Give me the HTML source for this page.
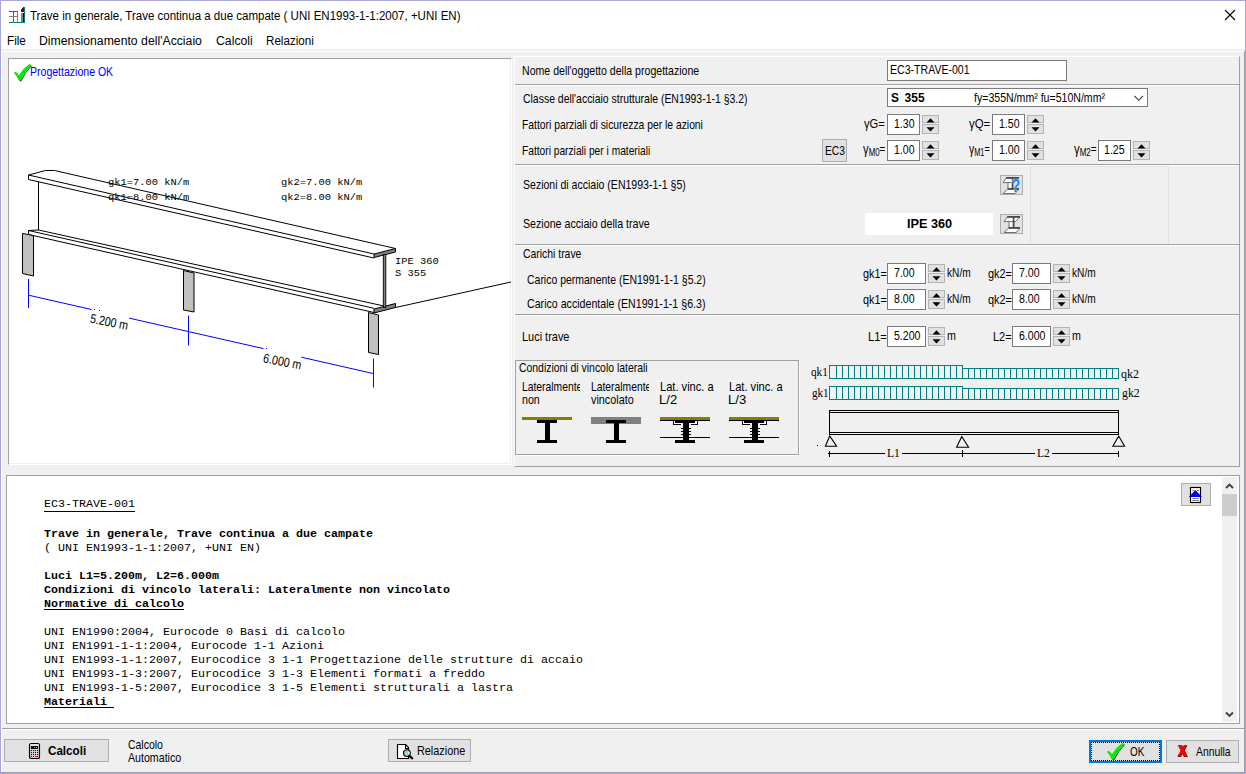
<!DOCTYPE html>
<html lang="it"><head><meta charset="utf-8"><title>Trave in generale, Trave continua a due campate</title>
<style>
html,body{margin:0;padding:0}
body{width:1246px;height:774px;position:relative;overflow:hidden;background:#f0f0f0;font:13px 'Liberation Sans',sans-serif;color:#000}
.a{position:absolute;box-sizing:border-box}
.t{position:absolute;white-space:pre;transform-origin:0 50%;display:block}
.inp{position:absolute;box-sizing:border-box;background:#fff;border:1px solid #7a7a7a}
.btn{position:absolute;box-sizing:border-box;background:#e1e1e1;border:1px solid #adadad}
.sb{position:absolute;box-sizing:border-box;background:#e1e1e1;border:1px solid #b4b4b4;width:17px}
.hl{position:absolute;height:1px;background:#a0a0a0}
.hw{position:absolute;height:1px;background:#fff}
svg{position:absolute;overflow:visible}
</style></head><body>
<div class="a" style="left:0;top:0;width:1246px;height:774px;border:1px solid #a9a7d8"></div>
<div class="a" style="left:1px;top:1px;width:1244px;height:48px;background:#fff"></div>
<div class="a" style="left:1px;top:51px;width:1243px;height:1px;background:#fff"></div>
<div class="a" style="left:1px;top:51px;width:1px;height:721px;background:#fff"></div>
<div class="a" style="left:1244px;top:51px;width:1px;height:722px;background:#a0a0a0"></div>
<div class="a" style="left:1px;top:772px;width:1244px;height:1px;background:#a0a0a0"></div>
<header class="titlebar">
<svg style="left:0;top:0" width="30" height="30" shape-rendering="crispEdges">
<rect x="9" y="11" width="9" height="1" fill="#008080"/><rect x="9" y="22" width="16" height="1" fill="#008080"/>
<rect x="13" y="11" width="1" height="12" fill="#008080"/><rect x="24" y="7" width="1" height="16" fill="#008080"/>
<rect x="9" y="16" width="9" height="1" fill="#808080"/><rect x="17" y="12" width="1" height="10" fill="#808080"/>
<rect x="21" y="13" width="2" height="9" fill="#808080"/><rect x="23" y="13" width="1" height="9" fill="#000080"/>
<polygon points="21,9 24,7 24,12 21,12" fill="#800000"/></svg>
<span class="t" id="t0" style="left:30.0px;top:5.67px;font:12.5px 'Liberation Sans',sans-serif;line-height:20px;transform:scaleX(0.9208);">Trave in generale, Trave continua a due campate ( UNI EN1993-1-1:2007, +UNI EN)</span>
<svg style="left:1224px;top:9px" width="12" height="12"><path d="M1,1 L11,11 M11,1 L1,11" stroke="#000" stroke-width="1.1" fill="none"/></svg>
</header><nav class="menubar">
<span class="t" id="t1" style="left:7.061996666709075px;top:30.67px;font:12.5px 'Liberation Sans',sans-serif;line-height:20px;transform:scaleX(0.9380);">File</span>
<span class="t" id="t2" style="left:39.02058889949978px;top:30.67px;font:12.5px 'Liberation Sans',sans-serif;line-height:20px;transform:scaleX(0.9794);">Dimensionamento dell'Acciaio</span>
<span class="t" id="t3" style="left:216.0px;top:30.67px;font:12.5px 'Liberation Sans',sans-serif;line-height:20px;transform:scaleX(0.9800);">Calcoli</span>
<span class="t" id="t4" style="left:265.57129317679926px;top:30.67px;font:12.5px 'Liberation Sans',sans-serif;line-height:20px;transform:scaleX(0.9287);">Relazioni</span>
</nav><main><section class="drawing-panel">
<div class="a" style="left:8px;top:58px;width:504px;height:407px;background:#fff;border:1px solid #a0a0a0;border-right-color:#fff;border-bottom-color:#fff;box-shadow:inset -1px -1px 0 #efefef"></div>
<svg style="left:0;top:0" width="40" height="90"><path d="M13.8,72.8 L15.6,71.7 Q17.6,73 18.9,75.2 Q23,68.5 29.3,64.1 L31.4,65.2 Q24.5,72 20.7,80.9 L18.5,80.1 Q17,76 13.8,72.8 Z" fill="#00ee00"/><path d="M31.6,65.6 Q24.9,72.2 21,81 L19.6,80.6" fill="none" stroke="#2c3a2c" stroke-width="1"/></svg>
<span class="t" id="t5" style="left:30.38976166756073px;top:61.50px;font:13px 'Liberation Sans',sans-serif;line-height:20px;color:#0000ff;transform:scaleX(0.8102);">Progettazione OK</span>
<svg style="left:0;top:0" width="520" height="470" fill="none" stroke="#000" stroke-width="1">
<g id="beam">
<!-- top flange -->
<path d="M28.5,175 L45.5,170.5 L54.5,170.5 L395.5,248.5"/>
<path d="M28.5,175 L374,254"/>
<path d="M28.5,175 L28.5,179.5 L374,258"/>
<!-- web left edge -->
<path d="M38.5,182 L38.5,230"/>
<!-- bottom flange -->
<path d="M28.5,234.5 L28.5,230.5 L38.5,230 L384,306"/>
<path d="M28.5,230.5 L374,308.3"/>
<path d="M28.5,234.5 L374,312.5"/>
<!-- right end section -->
<polygon points="374,254 395.5,248.5 395.5,252 374,257.5" fill="#808080"/>
<polygon points="374,309 395.5,303.5 395.5,307.5 374,313" fill="#808080"/>
<rect x="383.3" y="254.5" width="2.5" height="53" fill="#808080" stroke="#000" stroke-width="0.9"/>
<!-- line to right -->
<path d="M395.5,307.5 L511,282"/>
<!-- supports -->
<polygon points="22.5,233.5 28.5,234.5 33.5,236 33.5,276 22.5,273.5" fill="#c0c0c0"/>
<polygon points="183.5,270.5 194,273 194,312 183.5,310" fill="#c0c0c0"/>
<polygon points="368.5,312.5 378.5,315 378.5,354.5 368.5,352.5" fill="#c0c0c0"/>
</g>
<g stroke="#0000ff">
<path d="M28.5,279 V308 M188.5,315.5 V345.5 M373.5,358.5 V387.5"/>
<path d="M28.5,295.2 L91.5,309.5 M129,318.1 L188.5,331.6 L263.5,348.6 M301.3,357.2 L373.5,373.6"/>
</g>
</svg>
<span class="t" id="t6" style="left:108.0px;top:172.94px;font:9.6px 'Liberation Mono',monospace;line-height:20px;transform:scaleX(1.0854);">gk1=7.00 kN/m</span>
<span class="t" id="t7" style="left:108.0px;top:187.74px;font:9.6px 'Liberation Mono',monospace;line-height:20px;transform:scaleX(1.0854);">qk1=8.00 kN/m</span>
<span class="t" id="t8" style="left:281.0px;top:172.94px;font:9.6px 'Liberation Mono',monospace;line-height:20px;transform:scaleX(1.0854);">gk2=7.00 kN/m</span>
<span class="t" id="t9" style="left:281.0px;top:187.74px;font:9.6px 'Liberation Mono',monospace;line-height:20px;transform:scaleX(1.0854);">qk2=8.00 kN/m</span>
<span class="t" id="t10" style="left:395.0px;top:252.44px;font:9.6px 'Liberation Mono',monospace;line-height:20px;transform:scaleX(1.0853);">IPE 360</span>
<span class="t" id="t11" style="left:395.0px;top:264.44px;font:9.6px 'Liberation Mono',monospace;line-height:20px;transform:scaleX(1.0851);">S 355</span>
<svg style="left:0;top:0" width="520" height="470" font-family="'Liberation Sans',sans-serif" font-size="13" fill="#000">
<text transform="translate(89.5,322.6) rotate(11) scale(0.82,1)">5.200 m</text>
<text transform="translate(262.6,362.2) rotate(11) scale(0.82,1)">6.000 m</text>
<g fill="#0000ff" shape-rendering="crispEdges"><rect x="94" y="309" width="1" height="1"/><rect x="99" y="310" width="1" height="1"/><rect x="266" y="348" width="1" height="1"/></g></svg>
</section><section class="params-panel">
<div class="a" style="left:514px;top:56px;width:726px;height:411px;border:1px solid #fff;border-right-color:#a0a0a0;border-bottom-color:#a0a0a0"></div>
<div class="hl" style="left:515px;top:84px;width:724px"></div><div class="hw" style="left:515px;top:85px;width:724px"></div>
<div class="hl" style="left:515px;top:164px;width:724px"></div><div class="hw" style="left:515px;top:165px;width:724px"></div>
<div class="hl" style="left:515px;top:244px;width:724px"></div><div class="hw" style="left:515px;top:245px;width:724px"></div>
<div class="hl" style="left:515px;top:314px;width:724px"></div><div class="hw" style="left:515px;top:315px;width:724px"></div>
<div class="a" style="left:1030px;top:166px;width:139px;height:78px;border:1px solid #e2e2e2;border-bottom:none"></div>
<span class="t" id="t12" style="left:521.9865999761067px;top:60.50px;font:13px 'Liberation Sans',sans-serif;line-height:20px;transform:scaleX(0.8134);">Nome dell'oggetto della progettazione</span>
<span class="t" id="t13" style="left:522.8px;top:88.50px;font:13px 'Liberation Sans',sans-serif;line-height:20px;transform:scaleX(0.8039);">Classe dell'acciaio strutturale (EN1993-1-1 §3.2)</span>
<span class="t" id="t14" style="left:522.0051415476333px;top:114.50px;font:13px 'Liberation Sans',sans-serif;line-height:20px;transform:scaleX(0.7949);">Fattori parziali di sicurezza per le azioni</span>
<span class="t" id="t15" style="left:522.0148349054476px;top:140.50px;font:13px 'Liberation Sans',sans-serif;line-height:20px;transform:scaleX(0.7852);">Fattori parziali per i materiali</span>
<span class="t" id="t16" style="left:522.8px;top:174.50px;font:13px 'Liberation Sans',sans-serif;line-height:20px;transform:scaleX(0.8107);">Sezioni di acciaio (EN1993-1-1 §5)</span>
<span class="t" id="t17" style="left:522.8px;top:213.50px;font:13px 'Liberation Sans',sans-serif;line-height:20px;transform:scaleX(0.8199);">Sezione acciaio della trave</span>
<span class="t" id="t18" style="left:522.8px;top:243.50px;font:13px 'Liberation Sans',sans-serif;line-height:20px;transform:scaleX(0.8002);">Carichi trave</span>
<span class="t" id="t19" style="left:526.8px;top:269.50px;font:13px 'Liberation Sans',sans-serif;line-height:20px;transform:scaleX(0.8054);">Carico permanente (EN1991-1-1 §5.2)</span>
<span class="t" id="t20" style="left:526.8px;top:293.50px;font:13px 'Liberation Sans',sans-serif;line-height:20px;transform:scaleX(0.8178);">Carico accidentale (EN1991-1-1 §6.3)</span>
<span class="t" id="t21" style="left:521.9583661033762px;top:326.50px;font:13px 'Liberation Sans',sans-serif;line-height:20px;transform:scaleX(0.8416);">Luci trave</span>
<div class="inp" style="left:887px;top:60px;width:180px;height:21px"></div>
<span class="t" id="t22" style="left:889.787883802355px;top:59.50px;font:13px 'Liberation Sans',sans-serif;line-height:20px;transform:scaleX(0.8121);">EC3-TRAVE-001</span>
<div class="inp" style="left:887px;top:88px;width:261px;height:19px"></div>
<span class="t" id="t23" style="left:891px;top:87.50px;font:bold 13px 'Liberation Sans',sans-serif;line-height:20px;transform:scaleX(0.9209);word-spacing:2.5px;">S 355</span>
<span class="t" id="t24" style="left:974.3px;top:87.50px;font:13px 'Liberation Sans',sans-serif;line-height:20px;transform:scaleX(0.8129);">fy=355N/mm² fu=510N/mm²</span>
<svg style="left:1133px;top:94px" width="12" height="8"><path d="M1.5,2 L5.75,6.3 L10,2" stroke="#404040" stroke-width="1.1" fill="none"/></svg>
<span class="t" id="t25" style="left:864.0px;top:113.50px;font:13px 'Liberation Sans',sans-serif;line-height:20px;transform:scaleX(0.8555);">γG=</span>
<div class="inp" style="left:887px;top:114px;width:33px;height:21px"></div>
<span class="t" id="t26" style="left:894.0px;top:113.50px;font:13px 'Liberation Sans',sans-serif;line-height:20px;transform:scaleX(0.8097);">1.30</span>
<div class="sb" style="left:922px;top:115px;height:8px"></div><div class="sb" style="left:922px;top:124px;height:10px"></div><svg style="left:922px;top:114px" width="17" height="21"><polygon points="4.5,8.5 12.5,8.5 8.5,4.3" fill="#000"/><polygon points="4.5,13.2 12.5,13.2 8.5,17.4" fill="#000"/></svg>
<span class="t" id="t27" style="left:969.0px;top:113.50px;font:13px 'Liberation Sans',sans-serif;line-height:20px;transform:scaleX(0.8767);">γQ=</span>
<div class="inp" style="left:992px;top:114px;width:33px;height:21px"></div>
<span class="t" id="t28" style="left:999.0px;top:113.50px;font:13px 'Liberation Sans',sans-serif;line-height:20px;transform:scaleX(0.8097);">1.50</span>
<div class="sb" style="left:1027px;top:115px;height:8px"></div><div class="sb" style="left:1027px;top:124px;height:10px"></div><svg style="left:1027px;top:114px" width="17" height="21"><polygon points="4.5,8.5 12.5,8.5 8.5,4.3" fill="#000"/><polygon points="4.5,13.2 12.5,13.2 8.5,17.4" fill="#000"/></svg>
<span class="t" id="t29" style="left:862.6px;top:138.50px;font:13px 'Liberation Sans',sans-serif;line-height:20px;transform:scaleX(0.7512);"><span style="font-size:15px">γ</span><span style="font-size:10.5px;position:relative;top:2.5px">M0</span><span style="position:relative;top:-1px">=</span></span>
<div class="inp" style="left:887px;top:140px;width:33px;height:21px"></div>
<span class="t" id="t30" style="left:894.2px;top:139.50px;font:13px 'Liberation Sans',sans-serif;line-height:20px;transform:scaleX(0.8097);">1.00</span>
<div class="sb" style="left:922px;top:141px;height:8px"></div><div class="sb" style="left:922px;top:150px;height:10px"></div><svg style="left:922px;top:140px" width="17" height="21"><polygon points="4.5,8.5 12.5,8.5 8.5,4.3" fill="#000"/><polygon points="4.5,13.2 12.5,13.2 8.5,17.4" fill="#000"/></svg>
<span class="t" id="t31" style="left:969px;top:138.50px;font:13px 'Liberation Sans',sans-serif;line-height:20px;transform:scaleX(0.6973);"><span style="font-size:15px">γ</span><span style="font-size:10.5px;position:relative;top:2.5px">M1</span><span style="position:relative;top:-1px">=</span></span>
<div class="inp" style="left:992px;top:140px;width:33px;height:21px"></div>
<span class="t" id="t32" style="left:999.0px;top:139.50px;font:13px 'Liberation Sans',sans-serif;line-height:20px;transform:scaleX(0.8177);">1.00</span>
<div class="sb" style="left:1027px;top:141px;height:8px"></div><div class="sb" style="left:1027px;top:150px;height:10px"></div><svg style="left:1027px;top:140px" width="17" height="21"><polygon points="4.5,8.5 12.5,8.5 8.5,4.3" fill="#000"/><polygon points="4.5,13.2 12.5,13.2 8.5,17.4" fill="#000"/></svg>
<span class="t" id="t33" style="left:1074.2px;top:138.50px;font:13px 'Liberation Sans',sans-serif;line-height:20px;transform:scaleX(0.7613);"><span style="font-size:15px">γ</span><span style="font-size:10.5px;position:relative;top:2.5px">M2</span><span style="position:relative;top:-1px">=</span></span>
<div class="inp" style="left:1098px;top:140px;width:33px;height:21px"></div>
<span class="t" id="t34" style="left:1104.0px;top:139.50px;font:13px 'Liberation Sans',sans-serif;line-height:20px;transform:scaleX(0.8177);">1.25</span>
<div class="sb" style="left:1133px;top:141px;height:8px"></div><div class="sb" style="left:1133px;top:150px;height:10px"></div><svg style="left:1133px;top:140px" width="17" height="21"><polygon points="4.5,8.5 12.5,8.5 8.5,4.3" fill="#000"/><polygon points="4.5,13.2 12.5,13.2 8.5,17.4" fill="#000"/></svg>
<div class="btn" style="left:822px;top:139px;width:25px;height:23px"></div>
<span class="t" id="t35" style="left:824.9144338684473px;top:140.50px;font:13px 'Liberation Sans',sans-serif;line-height:20px;transform:scaleX(0.7856);">EC3</span>
<div class="btn" style="left:1000px;top:175px;width:23px;height:20px"></div>
<div class="btn" style="left:1000px;top:214px;width:23px;height:20px"></div>
<svg style="left:999px;top:175px" width="23" height="20" fill="#fff" stroke="#707070" stroke-width="1">
<polygon points="7.3,3 19.8,3 15.4,7.6 4,7.6"/>
<polygon points="9,7.6 13.4,7.6 13.4,13.6 9,13.6"/>
<polygon points="8.6,14 19.8,14 16.2,18.5 4,18.5"/>
<path d="M7.2,2.8 H20 M8.6,13.8 H20" stroke="#4a4a4a" stroke-width="1.7" fill="none"/><path d="M13.6,3 V14" stroke="#4a4a4a" stroke-width="1.7" fill="none"/></svg>
<svg style="left:1000px;top:214px" width="23" height="20" fill="#fff" stroke="#707070" stroke-width="1">
<polygon points="7.3,3 19.8,3 15.4,7.6 4,7.6"/>
<polygon points="9,7.6 13.4,7.6 13.4,13.6 9,13.6"/>
<polygon points="8.6,14 19.8,14 16.2,18.5 4,18.5"/>
<path d="M7.2,2.8 H20 M8.6,13.8 H20" stroke="#4a4a4a" stroke-width="1.7" fill="none"/><path d="M13.6,3 V14" stroke="#4a4a4a" stroke-width="1.7" fill="none"/></svg>
<span class="t" style="left:1011px;top:176px;font:bold 18px 'Liberation Sans',sans-serif;line-height:20px;color:#1a8cff;transform:scaleX(0.85);text-shadow:0 0 1px #fff">?</span>
<div class="a" style="left:865px;top:213px;width:128px;height:22px;background:#fff"></div>
<span class="t" id="t36" style="left:906.5px;top:213.50px;font:bold 13px 'Liberation Sans',sans-serif;line-height:20px;transform:scaleX(0.9755);">IPE 360</span>
<span class="t" id="t37" style="left:862.7px;top:263.50px;font:13px 'Liberation Sans',sans-serif;line-height:20px;transform:scaleX(0.8333);">gk1=</span>
<div class="inp" style="left:887px;top:263px;width:39px;height:21px"></div>
<span class="t" id="t38" style="left:893.8px;top:262.50px;font:13px 'Liberation Sans',sans-serif;line-height:20px;transform:scaleX(0.8137);">7.00</span>
<div class="sb" style="left:928px;top:264px;height:8px"></div><div class="sb" style="left:928px;top:273px;height:10px"></div><svg style="left:928px;top:263px" width="17" height="21"><polygon points="4.5,8.5 12.5,8.5 8.5,4.3" fill="#000"/><polygon points="4.5,13.2 12.5,13.2 8.5,17.4" fill="#000"/></svg>
<span class="t" id="t39" style="left:947.2px;top:262.50px;font:13px 'Liberation Sans',sans-serif;line-height:20px;transform:scaleX(0.7797);">kN/m</span>
<span class="t" id="t40" style="left:987.5px;top:263.50px;font:13px 'Liberation Sans',sans-serif;line-height:20px;transform:scaleX(0.8405);">gk2=</span>
<div class="inp" style="left:1012px;top:263px;width:39px;height:21px"></div>
<span class="t" id="t41" style="left:1018.8px;top:262.50px;font:13px 'Liberation Sans',sans-serif;line-height:20px;transform:scaleX(0.8137);">7.00</span>
<div class="sb" style="left:1053px;top:264px;height:8px"></div><div class="sb" style="left:1053px;top:273px;height:10px"></div><svg style="left:1053px;top:263px" width="17" height="21"><polygon points="4.5,8.5 12.5,8.5 8.5,4.3" fill="#000"/><polygon points="4.5,13.2 12.5,13.2 8.5,17.4" fill="#000"/></svg>
<span class="t" id="t42" style="left:1072.2px;top:262.50px;font:13px 'Liberation Sans',sans-serif;line-height:20px;transform:scaleX(0.7797);">kN/m</span>
<span class="t" id="t43" style="left:862.7px;top:289.50px;font:13px 'Liberation Sans',sans-serif;line-height:20px;transform:scaleX(0.8333);">qk1=</span>
<div class="inp" style="left:887px;top:289px;width:39px;height:21px"></div>
<span class="t" id="t44" style="left:893.8px;top:288.50px;font:13px 'Liberation Sans',sans-serif;line-height:20px;transform:scaleX(0.8137);">8.00</span>
<div class="sb" style="left:928px;top:290px;height:8px"></div><div class="sb" style="left:928px;top:299px;height:10px"></div><svg style="left:928px;top:289px" width="17" height="21"><polygon points="4.5,8.5 12.5,8.5 8.5,4.3" fill="#000"/><polygon points="4.5,13.2 12.5,13.2 8.5,17.4" fill="#000"/></svg>
<span class="t" id="t45" style="left:947.2px;top:288.50px;font:13px 'Liberation Sans',sans-serif;line-height:20px;transform:scaleX(0.7797);">kN/m</span>
<span class="t" id="t46" style="left:987.5px;top:289.50px;font:13px 'Liberation Sans',sans-serif;line-height:20px;transform:scaleX(0.8405);">qk2=</span>
<div class="inp" style="left:1012px;top:289px;width:39px;height:21px"></div>
<span class="t" id="t47" style="left:1018.8px;top:288.50px;font:13px 'Liberation Sans',sans-serif;line-height:20px;transform:scaleX(0.8137);">8.00</span>
<div class="sb" style="left:1053px;top:290px;height:8px"></div><div class="sb" style="left:1053px;top:299px;height:10px"></div><svg style="left:1053px;top:289px" width="17" height="21"><polygon points="4.5,8.5 12.5,8.5 8.5,4.3" fill="#000"/><polygon points="4.5,13.2 12.5,13.2 8.5,17.4" fill="#000"/></svg>
<span class="t" id="t48" style="left:1072.2px;top:288.50px;font:13px 'Liberation Sans',sans-serif;line-height:20px;transform:scaleX(0.7797);">kN/m</span>
<span class="t" id="t49" style="left:867.6446708987638px;top:326.50px;font:13px 'Liberation Sans',sans-serif;line-height:20px;transform:scaleX(0.8553);">L1=</span>
<div class="inp" style="left:887px;top:326px;width:39px;height:21px"></div>
<span class="t" id="t50" style="left:893.8px;top:325.50px;font:13px 'Liberation Sans',sans-serif;line-height:20px;transform:scaleX(0.8111);">5.200</span>
<div class="sb" style="left:928px;top:327px;height:8px"></div><div class="sb" style="left:928px;top:336px;height:10px"></div><svg style="left:928px;top:326px" width="17" height="21"><polygon points="4.5,8.5 12.5,8.5 8.5,4.3" fill="#000"/><polygon points="4.5,13.2 12.5,13.2 8.5,17.4" fill="#000"/></svg>
<span class="t" id="t51" style="left:947.2px;top:325.50px;font:13px 'Liberation Sans',sans-serif;line-height:20px;transform:scaleX(0.8200);">m</span>
<span class="t" id="t52" style="left:992.8544460884923px;top:326.50px;font:13px 'Liberation Sans',sans-serif;line-height:20px;transform:scaleX(0.8456);">L2=</span>
<div class="inp" style="left:1012px;top:326px;width:39px;height:21px"></div>
<span class="t" id="t53" style="left:1018.8px;top:325.50px;font:13px 'Liberation Sans',sans-serif;line-height:20px;transform:scaleX(0.8111);">6.000</span>
<div class="sb" style="left:1053px;top:327px;height:8px"></div><div class="sb" style="left:1053px;top:336px;height:10px"></div><svg style="left:1053px;top:326px" width="17" height="21"><polygon points="4.5,8.5 12.5,8.5 8.5,4.3" fill="#000"/><polygon points="4.5,13.2 12.5,13.2 8.5,17.4" fill="#000"/></svg>
<span class="t" id="t54" style="left:1072.2px;top:325.50px;font:13px 'Liberation Sans',sans-serif;line-height:20px;transform:scaleX(0.8200);">m</span>
<div class="a" style="left:515px;top:360px;width:284px;height:95px;border:1px solid #a0a0a0;box-shadow:1px 1px 0 #fff"></div>
<span class="t" id="t55" style="left:518.6px;top:357.50px;font:13px 'Liberation Sans',sans-serif;line-height:20px;transform:scaleX(0.8017);">Condizioni di vincolo laterali</span>
<div class="a" style="left:521.4px;top:378px;width:58.8px;height:16px;overflow:hidden"><span class="t" id="t56" style="left:0.20562521666895606px;top:-1.50px;font:13px 'Liberation Sans',sans-serif;line-height:20px;transform:scaleX(0.7944);">Lateralmente</span></div>
<span class="t" id="t57" style="left:522.4px;top:389.50px;font:13px 'Liberation Sans',sans-serif;line-height:20px;transform:scaleX(0.8201);">non</span>
<div class="a" style="left:590.4px;top:378px;width:58.8px;height:16px;overflow:hidden"><span class="t" id="t58" style="left:0.20562521666895606px;top:-1.50px;font:13px 'Liberation Sans',sans-serif;line-height:20px;transform:scaleX(0.7944);">Lateralmente</span></div>
<span class="t" id="t59" style="left:591.4px;top:389.50px;font:13px 'Liberation Sans',sans-serif;line-height:20px;transform:scaleX(0.8321);">vincolato</span>
<span class="t" id="t60" style="left:659.6458750711329px;top:376.50px;font:13px 'Liberation Sans',sans-serif;line-height:20px;transform:scaleX(0.8541);">Lat. vinc. a</span>
<span class="t" id="t61" style="left:659.4906065174533px;top:389.50px;font:13px 'Liberation Sans',sans-serif;line-height:20px;transform:scaleX(1.0094);">L/2</span>
<span class="t" id="t62" style="left:728.6458750711329px;top:376.50px;font:13px 'Liberation Sans',sans-serif;line-height:20px;transform:scaleX(0.8541);">Lat. vinc. a</span>
<span class="t" id="t63" style="left:728.4906065174533px;top:389.50px;font:13px 'Liberation Sans',sans-serif;line-height:20px;transform:scaleX(1.0094);">L/3</span>
<svg style="left:0;top:0" width="1246" height="470" shape-rendering="crispEdges">
<g><rect x="522" y="417" width="50" height="3" fill="#808000"/><rect x="537" y="420" width="20" height="3"/><rect x="545" y="420" width="5" height="23"/><rect x="537" y="440" width="20" height="3"/></g>
<g><rect x="591" y="417" width="50" height="7" fill="#808080"/><rect x="606" y="420" width="20" height="3"/><rect x="614" y="420" width="5" height="23"/><rect x="606" y="440" width="20" height="3"/></g>
<g transform="translate(0,0)"><rect x="660" y="417" width="50" height="3" fill="#808000"/><rect x="660" y="420" width="50" height="1"/>
<path d="M673.5,421 V424.5 H680.5 M697.5,421 V424.5 H690.5" fill="none" stroke="#000"/><path d="M674.5,421 V423.5 H681 M696.5,421 V423.5 H690" fill="none" stroke="#fff"/>
<rect x="675" y="421" width="20" height="2"/><rect x="683" y="421" width="6" height="22"/><rect x="681" y="428" width="10" height="1"/><rect x="681" y="431" width="10" height="1"/><rect x="681" y="434" width="10" height="1"/>
<rect x="660" y="437" width="50" height="1"/><rect x="675" y="440" width="20" height="3"/></g><g transform="translate(69,0)"><rect x="660" y="417" width="50" height="3" fill="#808000"/><rect x="660" y="420" width="50" height="1"/>
<path d="M673.5,421 V424.5 H680.5 M697.5,421 V424.5 H690.5" fill="none" stroke="#000"/><path d="M674.5,421 V423.5 H681 M696.5,421 V423.5 H690" fill="none" stroke="#fff"/>
<rect x="675" y="421" width="20" height="2"/><rect x="683" y="421" width="6" height="22"/><rect x="681" y="428" width="10" height="1"/><rect x="681" y="431" width="10" height="1"/><rect x="681" y="434" width="10" height="1"/>
<rect x="660" y="437" width="50" height="1"/><rect x="675" y="440" width="20" height="3"/></g></svg>
<div class="load-diagram">
<svg style="left:0;top:0" width="1246" height="470" shape-rendering="crispEdges" fill="none" stroke="#008080" stroke-width="1"><rect x="829.5" y="365.5" width="133" height="13"/><path d="M956.5,365 V378 M950.5,365 V378 M944.5,365 V378 M938.5,365 V378 M932.5,365 V378 M926.5,365 V378 M920.5,365 V378 M914.5,365 V378 M908.5,365 V378 M902.5,365 V378 M896.5,365 V378 M890.5,365 V378 M884.5,365 V378 M878.5,365 V378 M872.5,365 V378 M866.5,365 V378 M860.5,365 V378 M854.5,365 V378 M848.5,365 V378 M842.5,365 V378 M836.5,365 V378 "/><rect x="962.5" y="368.5" width="156" height="10"/><path d="M1112.5,368 V378 M1106.5,368 V378 M1100.5,368 V378 M1094.5,368 V378 M1088.5,368 V378 M1082.5,368 V378 M1076.5,368 V378 M1070.5,368 V378 M1064.5,368 V378 M1058.5,368 V378 M1052.5,368 V378 M1046.5,368 V378 M1040.5,368 V378 M1034.5,368 V378 M1028.5,368 V378 M1022.5,368 V378 M1016.5,368 V378 M1010.5,368 V378 M1004.5,368 V378 M998.5,368 V378 M992.5,368 V378 M986.5,368 V378 M980.5,368 V378 M974.5,368 V378 M968.5,368 V378 "/><rect x="829.5" y="386.5" width="133" height="13"/><path d="M956.5,386 V399 M950.5,386 V399 M944.5,386 V399 M938.5,386 V399 M932.5,386 V399 M926.5,386 V399 M920.5,386 V399 M914.5,386 V399 M908.5,386 V399 M902.5,386 V399 M896.5,386 V399 M890.5,386 V399 M884.5,386 V399 M878.5,386 V399 M872.5,386 V399 M866.5,386 V399 M860.5,386 V399 M854.5,386 V399 M848.5,386 V399 M842.5,386 V399 M836.5,386 V399 "/><rect x="962.5" y="388.5" width="156" height="11"/><path d="M1112.5,388 V399 M1106.5,388 V399 M1100.5,388 V399 M1094.5,388 V399 M1088.5,388 V399 M1082.5,388 V399 M1076.5,388 V399 M1070.5,388 V399 M1064.5,388 V399 M1058.5,388 V399 M1052.5,388 V399 M1046.5,388 V399 M1040.5,388 V399 M1034.5,388 V399 M1028.5,388 V399 M1022.5,388 V399 M1016.5,388 V399 M1010.5,388 V399 M1004.5,388 V399 M998.5,388 V399 M992.5,388 V399 M986.5,388 V399 M980.5,388 V399 M974.5,388 V399 M968.5,388 V399 "/><g stroke="#000"><rect x="829.5" y="410.5" width="289" height="24"/><path d="M829,412.5 H1118 M829,432.5 H1118" /><path d="M829.5,451 V457 M962.5,450 V457 M1118.5,451 V457 M828,453.5 H885 M902,453.5 H1035 M1052,453.5 H1119"/><rect x="817" y="445" width="1" height="1" fill="#000" stroke="none"/></g></svg>
<svg style="left:0;top:0" width="1246" height="470" fill="none" stroke="#000" stroke-width="1.1"><path d="M829.7,436 L825.4,446.3 H836.6 Z M961.8,436.6 L956.6,447.3 H968.6 Z M1118.7,436 L1112.9,446.3 H1124.6 Z"/></svg>
<span class="t" id="t64" style="left:810.8px;top:361.61px;font:13px 'Liberation Serif',serif;line-height:20px;transform:scaleX(0.8632);">qk1</span>
<span class="t" id="t65" style="left:811.8px;top:382.61px;font:13px 'Liberation Serif',serif;line-height:20px;transform:scaleX(0.8526);">gk1</span>
<span class="t" id="t66" style="left:1120.9px;top:363.61px;font:13px 'Liberation Serif',serif;line-height:20px;transform:scaleX(0.9211);">qk2</span>
<span class="t" id="t67" style="left:1121.8px;top:382.61px;font:13px 'Liberation Serif',serif;line-height:20px;transform:scaleX(0.9053);">gk2</span>
<span class="t" id="t68" style="left:887.4px;top:443.11px;font:13px 'Liberation Serif',serif;line-height:20px;transform:scaleX(0.8895);">L1</span>
<span class="t" id="t69" style="left:1037.0px;top:443.11px;font:13px 'Liberation Serif',serif;line-height:20px;transform:scaleX(0.8895);">L2</span>
</div></section><section class="report-panel">
<div class="a" style="left:6px;top:475px;width:1234px;height:249px;background:#fff;border:1px solid #a0a0a4"></div>
<div class="hl" style="left:2px;top:728px;width:1242px"></div><div class="hw" style="left:2px;top:729px;width:1242px"></div>
<span class="t" id="t70" style="left:44px;top:494.38px;font:10.6px 'Liberation Mono',monospace;line-height:20px;transform:scaleX(1.1009);">EC3-TRAVE-001</span>
<div class="a" style="left:44px;top:511px;width:91px;height:1px;background:#000"></div>
<span class="t" id="t71" style="left:44px;top:523.58px;font:bold 10.6px 'Liberation Mono',monospace;line-height:20px;transform:scaleX(1.1011);">Trave in generale, Trave continua a due campate</span>
<span class="t" id="t72" style="left:44px;top:537.58px;font:10.6px 'Liberation Mono',monospace;line-height:20px;transform:scaleX(1.1011);">( UNI EN1993-1-1:2007, +UNI EN)</span>
<span class="t" id="t73" style="left:44px;top:565.58px;font:bold 10.6px 'Liberation Mono',monospace;line-height:20px;transform:scaleX(1.1011);">Luci L1=5.200m, L2=6.000m</span>
<span class="t" id="t74" style="left:44px;top:579.58px;font:bold 10.6px 'Liberation Mono',monospace;line-height:20px;transform:scaleX(1.1011);">Condizioni di vincolo laterali: Lateralmente non vincolato</span>
<span class="t" id="t75" style="left:44px;top:593.58px;font:bold 10.6px 'Liberation Mono',monospace;line-height:20px;transform:scaleX(1.1010);">Normative di calcolo</span>
<div class="a" style="left:44px;top:609px;width:140px;height:1px;background:#000"></div>
<span class="t" id="t76" style="left:44px;top:621.58px;font:10.6px 'Liberation Mono',monospace;line-height:20px;transform:scaleX(1.1011);">UNI EN1990:2004, Eurocode 0 Basi di calcolo</span>
<span class="t" id="t77" style="left:44px;top:635.58px;font:10.6px 'Liberation Mono',monospace;line-height:20px;transform:scaleX(1.1011);">UNI EN1991-1-1:2004, Eurocode 1-1 Azioni</span>
<span class="t" id="t78" style="left:44px;top:649.58px;font:10.6px 'Liberation Mono',monospace;line-height:20px;transform:scaleX(1.1011);">UNI EN1993-1-1:2007, Eurocodice 3 1-1 Progettazione delle strutture di accaio</span>
<span class="t" id="t79" style="left:44px;top:663.58px;font:10.6px 'Liberation Mono',monospace;line-height:20px;transform:scaleX(1.1011);">UNI EN1993-1-3:2007, Eurocodice 3 1-3 Elementi formati a freddo</span>
<span class="t" id="t80" style="left:44px;top:677.58px;font:10.6px 'Liberation Mono',monospace;line-height:20px;transform:scaleX(1.1011);">UNI EN1993-1-5:2007, Eurocodice 3 1-5 Elementi strutturali a lastra</span>
<span class="t" id="t81" style="left:44px;top:691.58px;font:bold 10.6px 'Liberation Mono',monospace;line-height:20px;transform:scaleX(1.1010);">Materiali </span>
<div class="a" style="left:44px;top:707px;width:70px;height:1px;background:#000"></div>
<div class="a" style="left:1222px;top:477px;width:15px;height:245px;background:#f0f0f0"></div>
<div class="a" style="left:1222px;top:494px;width:15px;height:22px;background:#cdcdcd"></div>
<svg style="left:1222px;top:477px" width="16" height="246"><path d="M4,11 L7.5,7.5 L11,11" stroke="#404040" stroke-width="1.9" fill="none"/><path d="M4,235.5 L7.5,239 L11,235.5" stroke="#404040" stroke-width="1.9" fill="none"/></svg>
<div class="btn" style="left:1181px;top:483px;width:30px;height:23px"></div>
<svg style="left:1181px;top:483px" width="30" height="23"><rect x="9.5" y="4.5" width="10" height="15" fill="#fff" stroke="#000" stroke-width="1.15"/><path d="M11.2,7.5 H13.3 M16,7.5 H18 M11.2,15.5 H18 M11.2,17.5 H18" stroke="#808080"/><polygon points="7.8,14 14.4,6.9 21,14" fill="#0000ff"/></svg>
</section></main><footer class="buttonbar">
<div class="btn" style="left:4px;top:739px;width:105px;height:23px"></div>
<svg style="left:29px;top:743px" width="11" height="16"><rect x="0.5" y="0.5" width="10" height="15" rx="1.6" fill="#cfcfcf" stroke="#000" stroke-width="1.15"/>
<rect x="1.5" y="1.3" width="8" height="1.2" fill="#ececec"/>
<g shape-rendering="crispEdges"><rect x="2" y="3" width="7" height="3" fill="#000"/><rect x="5" y="4" width="1" height="1" fill="#00e0e0"/><rect x="7" y="4" width="1" height="1" fill="#00e0e0"/>
<g fill="#111"><rect x="2" y="7" width="1" height="1"/><rect x="4" y="7" width="1" height="1"/><rect x="6" y="7" width="1" height="1"/><rect x="8" y="7" width="1" height="1"/><rect x="2" y="9" width="1" height="1"/><rect x="4" y="9" width="1" height="1"/><rect x="6" y="9" width="1" height="1"/><rect x="8" y="9" width="1" height="1"/><rect x="2" y="11" width="1" height="1"/><rect x="4" y="11" width="1" height="1"/><rect x="6" y="11" width="1" height="1"/><rect x="8" y="11" width="1" height="1"/><rect x="2" y="13" width="1" height="1"/><rect x="4" y="13" width="1" height="1"/></g><rect x="6" y="13" width="3" height="1" fill="#ff0000"/></g></svg>
<span class="t" id="t82" style="left:47.7px;top:740.50px;font:bold 13px 'Liberation Sans',sans-serif;line-height:20px;transform:scaleX(0.8950);">Calcoli</span>
<span class="t" id="t83" style="left:128.3px;top:734.50px;font:13px 'Liberation Sans',sans-serif;line-height:20px;transform:scaleX(0.8046);">Calcolo</span>
<span class="t" id="t84" style="left:128.1px;top:747.50px;font:13px 'Liberation Sans',sans-serif;line-height:20px;transform:scaleX(0.8179);">Automatico</span>
<div class="btn" style="left:388px;top:739px;width:83px;height:23px"></div>
<svg style="left:396px;top:743px" width="18" height="17"><path d="M1.5,1.5 H9.5 L12.5,4.5 V15.5 H1.5 Z" fill="#fff" stroke="#000" stroke-width="1.15"/><path d="M9.5,1.5 V5.5 H12.5" fill="none" stroke="#000" stroke-width="1.1"/>
<circle cx="10.9" cy="10.1" r="3.4" fill="#cdc8c8" stroke="#000" stroke-width="1.15"/><rect x="9" y="8.2" width="1.7" height="1.6" fill="#00ffff"/><rect x="10.8" y="10.6" width="1.4" height="1.4" fill="#00ffff"/><rect x="12.4" y="8.8" width="1" height="2.8" fill="#fff"/>
<path d="M13.4,12.9 L16.3,15.4" stroke="#000" stroke-width="2.1" stroke-linecap="round"/></svg>
<span class="t" id="t85" style="left:417.36584890192864px;top:740.50px;font:13px 'Liberation Sans',sans-serif;line-height:20px;transform:scaleX(0.8342);">Relazione</span>
<div class="btn" style="left:1089px;top:740px;width:73px;height:23px;border:2px solid #0078d7"></div>
<div class="a" style="left:1091px;top:742px;width:69px;height:19px;border:1px dotted #000"></div>
<svg style="left:1092.8px;top:679.1px" width="40" height="90"><path d="M13.8,72.8 L15.6,71.7 Q17.6,73 18.9,75.2 Q23,68.5 29.3,64.1 L31.4,65.2 Q24.5,72 20.7,80.9 L18.5,80.1 Q17,76 13.8,72.8 Z" fill="#00ee00"/><path d="M31.6,65.6 Q24.9,72.2 21,81 L19.6,80.6" fill="none" stroke="#2c3a2c" stroke-width="1"/></svg>
<span class="t" id="t86" style="left:1129.6px;top:741.50px;font:13px 'Liberation Sans',sans-serif;line-height:20px;transform:scaleX(0.7639);">OK</span>
<div class="btn" style="left:1166px;top:740px;width:73px;height:23px"></div>
<svg style="left:0;top:0" width="1246" height="774"><g fill="#3a1a1a" transform="translate(0.6,0.5)"><polygon points="1183.9,745 1186.9,745 1180.3,756.6 1177.2,756.6"/><polygon points="1177.7,745 1181.8,745 1187.3,756.6 1183.6,756.6"/></g>
<g fill="#ff0000"><polygon points="1183.9,745 1186.9,745 1180.3,756.6 1177.2,756.6"/><polygon points="1177.7,745 1181.8,745 1187.3,756.6 1183.6,756.6"/></g></svg>
<span class="t" id="t87" style="left:1196.0px;top:741.50px;font:13px 'Liberation Sans',sans-serif;line-height:20px;transform:scaleX(0.7975);">Annulla</span>
</footer></body></html>
